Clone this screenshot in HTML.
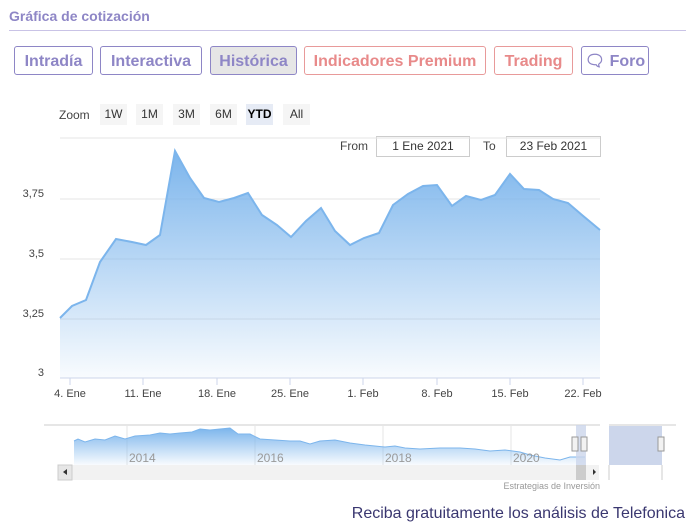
<!DOCTYPE html>
<html><head><meta charset="utf-8"><style>
body{margin:0;width:698px;height:525px;background:#fff;font-family:"Liberation Sans",sans-serif;position:relative;overflow:hidden}
.t{position:absolute;left:9px;top:8px;font-size:14px;font-weight:bold;color:#8e86c6}
.hr{position:absolute;left:9px;top:30px;width:677px;height:1px;background:#c9c3e6}
.b{position:absolute;top:46px;height:29px;box-sizing:border-box;border:1px solid #8e86c6;border-radius:3px;color:#8e86c6;font-weight:bold;font-size:16px;line-height:30px;text-align:center}
.r{border-color:#e89a9a;color:#e88a8a}
.z{position:absolute;top:104px;height:21px;font-size:12px;line-height:21px;color:#333;text-align:center;background:#f5f5f5;width:27px}
.s{position:absolute;font-size:11px;color:#444}
.in{position:absolute;top:136px;height:21px;border:1px solid #ccc;box-sizing:border-box;font-size:12px;line-height:19px;text-align:center;color:#333}
</style></head><body>
<div class="t">Gráfica de cotización</div><div class="hr"></div>
<div class="b" style="left:14px;width:79px">Intradía</div>
<div class="b" style="left:100px;width:102px">Interactiva</div>
<div class="b" style="left:210px;width:87px;background:#e6e6e6">Histórica</div>
<div class="b r" style="left:304px;width:182px">Indicadores Premium</div>
<div class="b r" style="left:494px;width:79px">Trading</div>
<div class="b" style="left:581px;width:68px">&#x1F5E8;&#xFE0E; Foro</div>
<div class="s" style="left:59px;top:108px;font-size:12px">Zoom</div>
<div class="z" style="left:100px">1W</div><div class="z" style="left:136px">1M</div><div class="z" style="left:173px">3M</div><div class="z" style="left:210px">6M</div><div class="z" style="left:246px;background:#e6ebf5;font-weight:bold;color:#000">YTD</div><div class="z" style="left:283px">All</div>
<div class="s" style="left:340px;top:139px;font-size:12px">From</div>
<div class="in" style="left:376px;width:94px">1 Ene 2021</div>
<div class="s" style="left:483px;top:139px;font-size:12px">To</div>
<div class="in" style="left:506px;width:95px">23 Feb 2021</div>
<svg style="position:absolute;left:0;top:0" width="698" height="525">
<defs><linearGradient id="g" x1="0" y1="0" x2="0" y2="1"><stop offset="0" stop-color="#7cb5ec"/><stop offset="1" stop-color="#7cb5ec" stop-opacity="0.05"/></linearGradient></defs>
<line x1="60" y1="138" x2="600" y2="138" stroke="#e6e6e6"/>
<g stroke="#e6e6e6"><line x1="60" y1="199" x2="600" y2="199"/><line x1="60" y1="259" x2="600" y2="259"/><line x1="60" y1="319" x2="600" y2="319"/></g>
<path d="M60,318 L72,306 86,300 100,262 116,239 132,242 146,245 160,235 175,151 190,178 204,198 219,202 234,198 248,193 262,215 277,225 291,237 306,221 321,208 335,231 350,245 364,238 379,233 393,205 408,194 423,186 437,185 452,206 466,196 481,200 495,195 510,174 524,189 539,190 553,199 568,203 582,215 600,230 L600,378 L60,378Z" fill="url(#g)"/>
<path d="M60,318 L72,306 86,300 100,262 116,239 132,242 146,245 160,235 175,151 190,178 204,198 219,202 234,198 248,193 262,215 277,225 291,237 306,221 321,208 335,231 350,245 364,238 379,233 393,205 408,194 423,186 437,185 452,206 466,196 481,200 495,195 510,174 524,189 539,190 553,199 568,203 582,215 600,230" fill="none" stroke="#7cb5ec" stroke-width="2"/>
<line x1="60" y1="378" x2="600" y2="378" stroke="#ccd6eb"/>
<g stroke="#ccd6eb"><line x1="70" y1="378" x2="70" y2="385"/><line x1="143" y1="378" x2="143" y2="385"/><line x1="217" y1="378" x2="217" y2="385"/><line x1="290" y1="378" x2="290" y2="385"/><line x1="363" y1="378" x2="363" y2="385"/><line x1="437" y1="378" x2="437" y2="385"/><line x1="510" y1="378" x2="510" y2="385"/><line x1="583" y1="378" x2="583" y2="385"/></g>
<g font-size="11" fill="#444" text-anchor="end"><text x="44" y="197">3,75</text><text x="44" y="257">3,5</text><text x="44" y="317">3,25</text><text x="44" y="376">3</text></g>
<g font-size="11" fill="#444" text-anchor="middle"><text x="70" y="397">4. Ene</text><text x="143" y="397">11. Ene</text><text x="217" y="397">18. Ene</text><text x="290" y="397">25. Ene</text><text x="363" y="397">1. Feb</text><text x="437" y="397">8. Feb</text><text x="510" y="397">15. Feb</text><text x="583" y="397">22. Feb</text></g>
<line x1="44" y1="425" x2="600" y2="425" stroke="#ccc"/>
<g stroke="#e6e6e6"><line x1="127" y1="425" x2="127" y2="465"/><line x1="255" y1="425" x2="255" y2="465"/><line x1="383" y1="425" x2="383" y2="465"/><line x1="511" y1="425" x2="511" y2="465"/></g>
<path d="M74,441 L78,439 85,442 95,439 105,440 115,436 125,439 135,436 150,435 160,433 170,434 180,433 192,432 200,429 210,430 220,429 230,428 238,434 250,434 260,439 275,440 290,441 300,441 310,444 320,441 335,440 350,443 365,445 375,446 385,447 395,446 405,448 420,449 440,448 460,448 475,449 490,451 505,450 520,452 530,455 545,458 560,460 570,457 585,457 L585,465 L74,465Z" fill="url(#g)"/>
<path d="M74,441 L78,439 85,442 95,439 105,440 115,436 125,439 135,436 150,435 160,433 170,434 180,433 192,432 200,429 210,430 220,429 230,428 238,434 250,434 260,439 275,440 290,441 300,441 310,444 320,441 335,440 350,443 365,445 375,446 385,447 395,446 405,448 420,449 440,448 460,448 475,449 490,451 505,450 520,452 530,455 545,458 560,460 570,457 585,457" fill="none" stroke="#7cb5ec"/>
<rect x="576" y="425" width="10" height="40" fill="#ccd6eb" opacity="0.8"/>
<g font-size="12" fill="#999"><text x="129" y="462">2014</text><text x="257" y="462">2016</text><text x="385" y="462">2018</text><text x="513" y="462">2020</text></g>
<rect x="572" y="437" width="6" height="14" fill="#f2f2f2" stroke="#999"/><rect x="581" y="437" width="6" height="14" fill="#f2f2f2" stroke="#999"/>
<rect x="58" y="465" width="541" height="15" fill="#f2f2f2"/><rect x="58" y="465" width="14" height="15" fill="#e6e6e6" stroke="#ccc"/><path d="M63,472 l4,-3 v6z" fill="#333"/>
<rect x="576" y="465" width="10" height="15" fill="#ccc"/><path d="M593,469 l3,3 -3,3z" fill="#333"/>
<line x1="609" y1="425" x2="676" y2="425" stroke="#ccc"/>
<rect x="609" y="426" width="53" height="39" fill="#ccd6eb"/><line x1="609" y1="465" x2="609" y2="480" stroke="#ccc"/><line x1="662" y1="465" x2="662" y2="480" stroke="#ccc"/>
<rect x="658" y="437" width="6" height="14" fill="#f2f2f2" stroke="#999"/>
<text x="600" y="489" font-size="9" fill="#999" text-anchor="end">Estrategias de Inversión</text>
<text x="685" y="518" font-size="16" fill="#3a3770" text-anchor="end">Reciba gratuitamente los análisis de Telefonica</text>
</svg>
</body></html>
